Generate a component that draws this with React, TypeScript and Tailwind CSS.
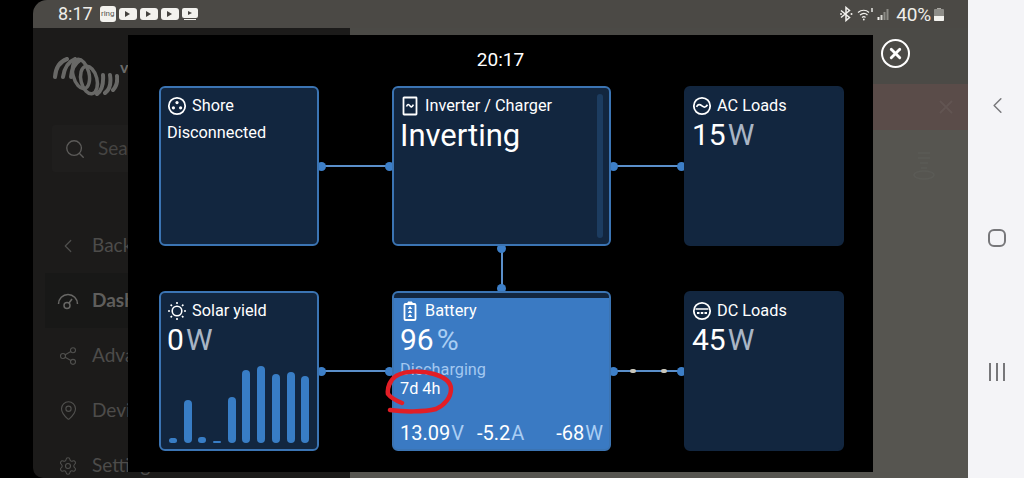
import { ChevronLeft, MapPin, Search, Settings, Share2, X } from "lucide-react";
import type { ReactNode } from "react";

const yieldBars = [5, 43, 6, 2, 46, 73, 77, 69, 71, 67];

function ShoreIcon() {
  return (
    <svg width="20" height="20" viewBox="0 0 20 20" fill="none" stroke="white">
      <circle cx="10" cy="10" r="8.2" strokeWidth="1.8" />
      <circle cx="10" cy="6.6" r="1.6" fill="white" stroke="none" />
      <circle cx="6.4" cy="11.8" r="1.6" fill="white" stroke="none" />
      <circle cx="13.6" cy="11.8" r="1.6" fill="white" stroke="none" />
    </svg>
  );
}

function InverterIcon() {
  return (
    <svg width="20" height="20" viewBox="0 0 20 20" fill="none" stroke="white">
      <rect x="3.5" y="1.5" width="13" height="17" rx="0.5" strokeWidth="1.8" />
      <path d="M6.5 10.5c1-2.6 2.2-2.6 3.3-.8s2.4 1.6 3.6-1" strokeWidth="1.6" />
    </svg>
  );
}

function AcIcon() {
  return (
    <svg width="20" height="20" viewBox="0 0 20 20" fill="none" stroke="white">
      <circle cx="10" cy="10" r="8.2" strokeWidth="1.8" />
      <path d="M4.500 10.800c1.400-2.800 3.200-2.800 5.500-1s3.800 1.800 5.500-1" strokeWidth="1.700" />
    </svg>
  );
}

function DcIcon() {
  return (
    <svg width="20" height="20" viewBox="0 0 20 20" fill="none" stroke="white">
      <circle cx="10" cy="10" r="8.2" strokeWidth="1.8" />
      <path d="M3.500 8h13" strokeWidth="1.700" />
      <path d="M5 12h2.500M8.800 12h2.500M12.500 12H15" strokeWidth="1.800" />
    </svg>
  );
}

function SunIcon() {
  return (
    <svg width="20" height="20" viewBox="0 0 20 20" fill="none" stroke="white" strokeWidth="1.600">
      <circle cx="10" cy="10" r="4.800" />
      <path d="M10 1v2M10 17v2M1 10h2M17 10h2M3.600 3.600 5 5M15 15l1.400 1.400M3.600 16.400 5 15M15 5l1.400-1.400" />
    </svg>
  );
}

function BatteryIcon() {
  return (
    <svg width="20" height="20" viewBox="0 0 20 20" fill="none" stroke="white">
      <path d="M8 1h4v2h-4z" fill="white" />
      <rect x="4.500" y="3" width="11" height="16" rx="1" strokeWidth="1.800" />
      <path d="M10 5l2.300 2.900H7.700zM10 9l2.300 2.900H7.700zM10 13l2.300 2.900H7.700z" fill="white" stroke="none" />
    </svg>
  );
}

function VictronLogo() {
  return (
    <svg width="66" height="40" viewBox="0 0 66 40" fill="none" stroke="#686866" strokeWidth="4" strokeLinecap="round">
      <path d="M2 20Q3 6 14 2M10 20Q12 6 22 2" />
      <path d="M18 20Q19 8 27 3" />
      <ellipse cx="28" cy="17" rx="8" ry="15" transform="rotate(-14 28 17)" strokeWidth="3.500" />
      <ellipse cx="36" cy="23" rx="8" ry="14" transform="rotate(-14 36 23)" strokeWidth="3.500" />
      <path d="M44 37Q51 32 50 18M52 36Q59 31 57 18M60 33Q65 28 64 19" />
    </svg>
  );
}

function PlayBadge() {
  return (
    <div className="flex h-[12px] w-[18px] items-center justify-center rounded-[3px] bg-[#f3f2ee]">
      <div className="h-0 w-0 border-y-[3px] border-l-[5px] border-y-transparent border-l-[#44423e]" />
    </div>
  );
}

function StatusBar() {
  return (
    <div className="flex h-[28px] shrink-0 items-center bg-[#4b4945] pl-[25px] pr-[24px] text-[#efeeea]">
      <span className="text-[18px] leading-none">8:17</span>
      <div className="ml-[7px] flex h-[16px] w-[16px] items-center justify-center overflow-hidden rounded-[3px] bg-[#f3f2ee] text-[8px] text-[#55534f]">
        ring
      </div>
      <div className="ml-[3px] flex items-center gap-[3px]">
        <PlayBadge />
        <PlayBadge />
        <PlayBadge />
        <div className="flex flex-col items-center gap-[1px]">
          <div className="flex h-[10px] w-[16px] items-center justify-center rounded-[2px] bg-[#f3f2ee]">
            <div className="h-0 w-0 border-y-[2.500px] border-l-[4px] border-y-transparent border-l-[#44423e]" />
          </div>
          <div className="h-[1px] w-[12px] bg-[#f3f2ee]" />
        </div>
      </div>
      <div className="ml-auto flex items-center">
        <svg width="14" height="16" viewBox="0 0 14 16" fill="none" stroke="#f3f2ee" strokeWidth="1.500">
          <path d="M2 4.500 10.500 11.500 7 14.500V1.500L10.500 4.500 2 11.500" />
          <circle cx="2" cy="8" r="1" fill="#f3f2ee" stroke="none" />
          <circle cx="12.500" cy="8" r="1" fill="#f3f2ee" stroke="none" />
        </svg>
        <svg className="ml-[4px]" width="17" height="14" viewBox="0 0 17 14" fill="none" stroke="#f3f2ee" strokeWidth="1.200">
          <path d="M1 5.500c3.500-3 8-3 11 0M3 8c2.500-2 5.500-2 7.500 0M5 10.500c1.300-1 2.500-1 3.500 0" />
          <circle cx="6.800" cy="12.500" r="0.900" fill="#f3f2ee" stroke="none" />
          <path d="M15 1v4" strokeWidth="1.400" />
        </svg>
        <svg className="ml-[3px]" width="14" height="14" viewBox="0 0 14 14">
          <rect x="0.500" y="10" width="2" height="3" fill="#f3f2ee" />
          <rect x="3.500" y="8" width="2" height="5" fill="#d8d7d2" />
          <rect x="6.500" y="5" width="2" height="8" fill="#8c8b86" />
          <rect x="9.500" y="2" width="2" height="11" fill="#8c8b86" />
        </svg>
        <span className="ml-[5px] text-[19px] leading-none tracking-[-0.2px]">40%</span>
        <div className="ml-[3px] flex flex-col items-center">
          <div className="h-[1px] w-[4px] bg-[#a9a8a3]" />
          <div className="flex h-[12px] w-[10px] flex-col justify-end rounded-[1px] bg-[#8e8d88]">
            <div className="h-[5px] rounded-b-[1px] bg-[#f3f2ee]" />
          </div>
        </div>
      </div>
    </div>
  );
}

function NavRow({ icon, label, active }: { icon: ReactNode; label: string; active?: boolean }) {
  return (
    <div
      className={`flex h-[55px] shrink-0 items-center gap-[13px] pl-[12px] text-[19px] ${
        active ? "bg-[#181817] font-bold text-[#5f5e5c]" : "text-[#4d4c4a]"
      }`}
    >
      <div className="flex w-[22px] justify-center text-[#50504e]">{icon}</div>
      {label}
    </div>
  );
}

function Sidebar() {
  return (
    <div className="flex w-[317px] shrink-0 flex-col rounded-bl-[8px] bg-[#1c1b1a] font-['Lato',sans-serif]">
      <div className="mt-[29px] flex h-[39px] shrink-0 items-start pl-[20px]">
        <VictronLogo />
        <span className="ml-[1px] mt-[2px] text-[16px] font-bold leading-none text-[#6b6b69]">victron</span>
      </div>
      <div className="ml-[19px] mr-[20px] mt-[29px] flex h-[47px] shrink-0 items-center gap-[12px] rounded-[3px] bg-[#1f1e1d] pl-[12px] text-[19px] text-[#454442]">
        <Search size={22} strokeWidth={1.500} className="text-[#5c5b59]" />
        Search
      </div>
      <div className="mt-[46px] flex flex-col pl-[12px]">
        <NavRow icon={<ChevronLeft size={24} strokeWidth={1.300} />} label="Back" />
        <NavRow
          active
          label="Dashboard"
          icon={
            <svg width="22" height="20" viewBox="0 0 22 20" fill="none" stroke="#686765" strokeWidth="1.500">
              <path d="M1.500 13a9.500 9.500 0 0 1 19 0" />
              <circle cx="10" cy="14.500" r="3" />
              <path d="M12 12l3-4" />
            </svg>
          }
        />
        <NavRow icon={<Share2 size={20} strokeWidth={1.300} />} label="Advanced" />
        <NavRow icon={<MapPin size={21} strokeWidth={1.300} />} label="Device list" />
        <NavRow icon={<Settings size={20} strokeWidth={1.300} />} label="Settings" />
      </div>
    </div>
  );
}

function DimmedMain() {
  return (
    <div className="flex flex-1 flex-col bg-[#565550]">
      <div className="h-[56px] bg-[#4b4a46]" />
      <div className="flex h-[46px] items-center justify-end bg-[#5a4c49] pr-[11px] text-[#625552]">
        <X size={22} strokeWidth={2} />
      </div>
      <div className="flex justify-end pr-[33px] pt-[20px]">
        <svg width="22" height="32" viewBox="0 0 22 32" fill="none" stroke="#5b5b56" strokeWidth="1.500">
          <path d="M5 3h12M5 8h12M7 13h8M8 18h6" />
          <ellipse cx="11" cy="25" rx="10" ry="4" />
        </svg>
      </div>
    </div>
  );
}

function Card({
  icon,
  title,
  children,
  className = "border-[#3b74b3] bg-[#12263f]",
}: {
  icon: ReactNode;
  title: string;
  children?: ReactNode;
  className?: string;
}) {
  return (
    <div className={`relative z-10 flex h-full flex-col overflow-hidden rounded-[6px] border-2 px-[6px] pt-[8px] text-white ${className}`}>
      <div className="flex h-[20px] items-center gap-[5px] text-[16.300px] leading-none">
        {icon}
        <span>{title}</span>
      </div>
      {children}
    </div>
  );
}

function Value({ value, unit }: { value: string; unit: string }) {
  return (
    <div className="mt-[1px] h-[36px] text-[30px] leading-[36px]">
      {value}
      <span className="ml-[2px] text-[#a9b5c5]">{unit}</span>
    </div>
  );
}

function Dot({ className }: { className: string }) {
  return <div className={`absolute h-[9px] w-[9px] rounded-full bg-[#3d7fc8] ${className}`} />;
}

function HLink({ moving }: { moving?: boolean }) {
  return (
    <div className="flex h-full items-center">
      <div className="relative h-[2px] w-full bg-[#5b8fca]">
        <Dot className="-left-[2px] -top-[3.500px]" />
        <Dot className="-right-[2px] -top-[3.500px]" />
        {moving && (
          <>
            <div className="absolute -top-[1px] left-[19px] h-[4px] w-[6px] rounded-full bg-[#c9c6ba]" />
            <div className="absolute -top-[1px] left-[50px] h-[4px] w-[6px] rounded-full bg-[#c9c6ba]" />
          </>
        )}
      </div>
    </div>
  );
}

function Reading({ value, unit }: { value: string; unit: string }) {
  return (
    <span>
      {value}
      <span className="ml-[1px] text-[#a9cdf3]">{unit}</span>
    </span>
  );
}

function OverviewModal() {
  return (
    <div className="absolute left-[95px] top-[35px] z-20 flex h-[437px] w-[745px] flex-col bg-black font-['Roboto',sans-serif]">
      <div className="flex h-[50px] shrink-0 items-center justify-center text-[19px] text-white">20:17</div>
      <div className="ml-[31px] mt-[1px] grid grid-cols-[160px_73px_219px_73px_160px] grid-rows-[160px_45px_160px]">
        <Card icon={<ShoreIcon />} title="Shore">
          <div className="mt-[7px] text-[16.300px] leading-[20px]">Disconnected</div>
        </Card>
        <HLink />
        <Card icon={<InverterIcon />} title="Inverter / Charger">
          <div className="mt-[1px] h-[38px] text-[31px] leading-[38px]">Inverting</div>
          <div className="absolute bottom-[6px] right-[6px] top-[6px] w-[6px] rounded-[3px] bg-[#1c3c60]" />
        </Card>
        <HLink />
        <Card icon={<AcIcon />} title="AC Loads" className="border-[#12263f] bg-[#12263f]">
          <Value value="15" unit="W" />
        </Card>

        <div />
        <div />
        <div className="flex justify-center">
          <div className="relative w-[2px] bg-[#5b8fca]">
            <Dot className="-left-[3.500px] -top-[2px]" />
            <Dot className="-bottom-[2px] -left-[3.500px]" />
          </div>
        </div>
        <div />
        <div />

        <Card icon={<SunIcon />} title="Solar yield">
          <Value value="0" unit="W" />
          <div className="absolute bottom-[6px] left-[8px] flex items-end gap-[6.700px]">
            {yieldBars.map((h, i) => (
              <div key={i} className="w-[8px] rounded-full bg-[#387dc5]" style={{ height: h }} />
            ))}
          </div>
        </Card>
        <HLink />
        <div className="relative z-10 h-full">
          <Card icon={<BatteryIcon />} title="Battery" className="border-[#3b74b3] bg-[#3a7ac3]">
            <div className="absolute left-0 right-0 top-0 h-[5px] bg-[#12263f]" />
            <div className="mt-[1px] h-[36px] text-[30px] leading-[36px]">
              96<span className="ml-[3px] text-[#a9cdf3]">%</span>
            </div>
            <div className="mt-[2px] text-[16.300px] leading-[20px] text-[#a3c8f0]">Discharging</div>
            <div className="-mt-[1px] text-[16.300px] leading-[20px]">7d 4h</div>
            <div className="mb-[4px] mt-auto flex h-[24px] items-center gap-[13px] text-[20px] leading-none">
              <Reading value="13.09" unit="V" />
              <Reading value="-5.2" unit="A" />
              <span className="ml-auto">
                <Reading value="-68" unit="W" />
              </span>
            </div>
          </Card>
          {/* red marker scribble from the screenshot */}
          <svg className="absolute -left-[8px] top-[78px] z-10" width="72" height="46" viewBox="0 0 72 46" fill="none">
            <path
              d="M6 41c14 2 34 2 46-1 9-4 15-12 15-20 0-7-7-12-17-15C36 1 20 2 12 7 6 11 3 19 4 25c3 4 9 7 14 9"
              stroke="#e21e26"
              strokeWidth="4.500"
              strokeLinecap="round"
            />
          </svg>
        </div>
        <HLink moving />
        <Card icon={<DcIcon />} title="DC Loads" className="border-[#12263f] bg-[#12263f]">
          <Value value="45" unit="W" />
        </Card>
      </div>
    </div>
  );
}

function CloseButton() {
  return (
    <div className="absolute left-[848px] top-[39px] z-20 flex h-[29px] w-[29px] items-center justify-center rounded-full border-2 border-white text-white">
      <X size={17} strokeWidth={4} />
    </div>
  );
}

function SystemNav() {
  return (
    <div className="flex w-[56px] shrink-0 flex-col items-center bg-[#f4f4f7] pl-[2px] pt-[92px] text-[#77777a]">
      <ChevronLeft size={27} strokeWidth={1.300} />
      <div className="mt-[110px] h-[18px] w-[18px] rounded-[6px] border-2 border-[#77777a]" />
      <div className="mt-[116px] flex gap-[5.500px]">
        <div className="h-[18px] w-[1.500px] bg-[#77777a]" />
        <div className="h-[18px] w-[1.500px] bg-[#77777a]" />
        <div className="h-[18px] w-[1.500px] bg-[#77777a]" />
      </div>
    </div>
  );
}

export default function App() {
  return (
    <div className="flex h-[478px] w-[1024px] overflow-hidden bg-black pl-[33px] font-['Roboto',sans-serif]">
      <div className="relative flex flex-1 flex-col overflow-hidden rounded-tl-[14px] rounded-bl-[10px]">
        <StatusBar />
        <div className="flex flex-1 overflow-hidden">
          <Sidebar />
          <DimmedMain />
        </div>
        <OverviewModal />
        <CloseButton />
      </div>
      <SystemNav />
    </div>
  );
}
